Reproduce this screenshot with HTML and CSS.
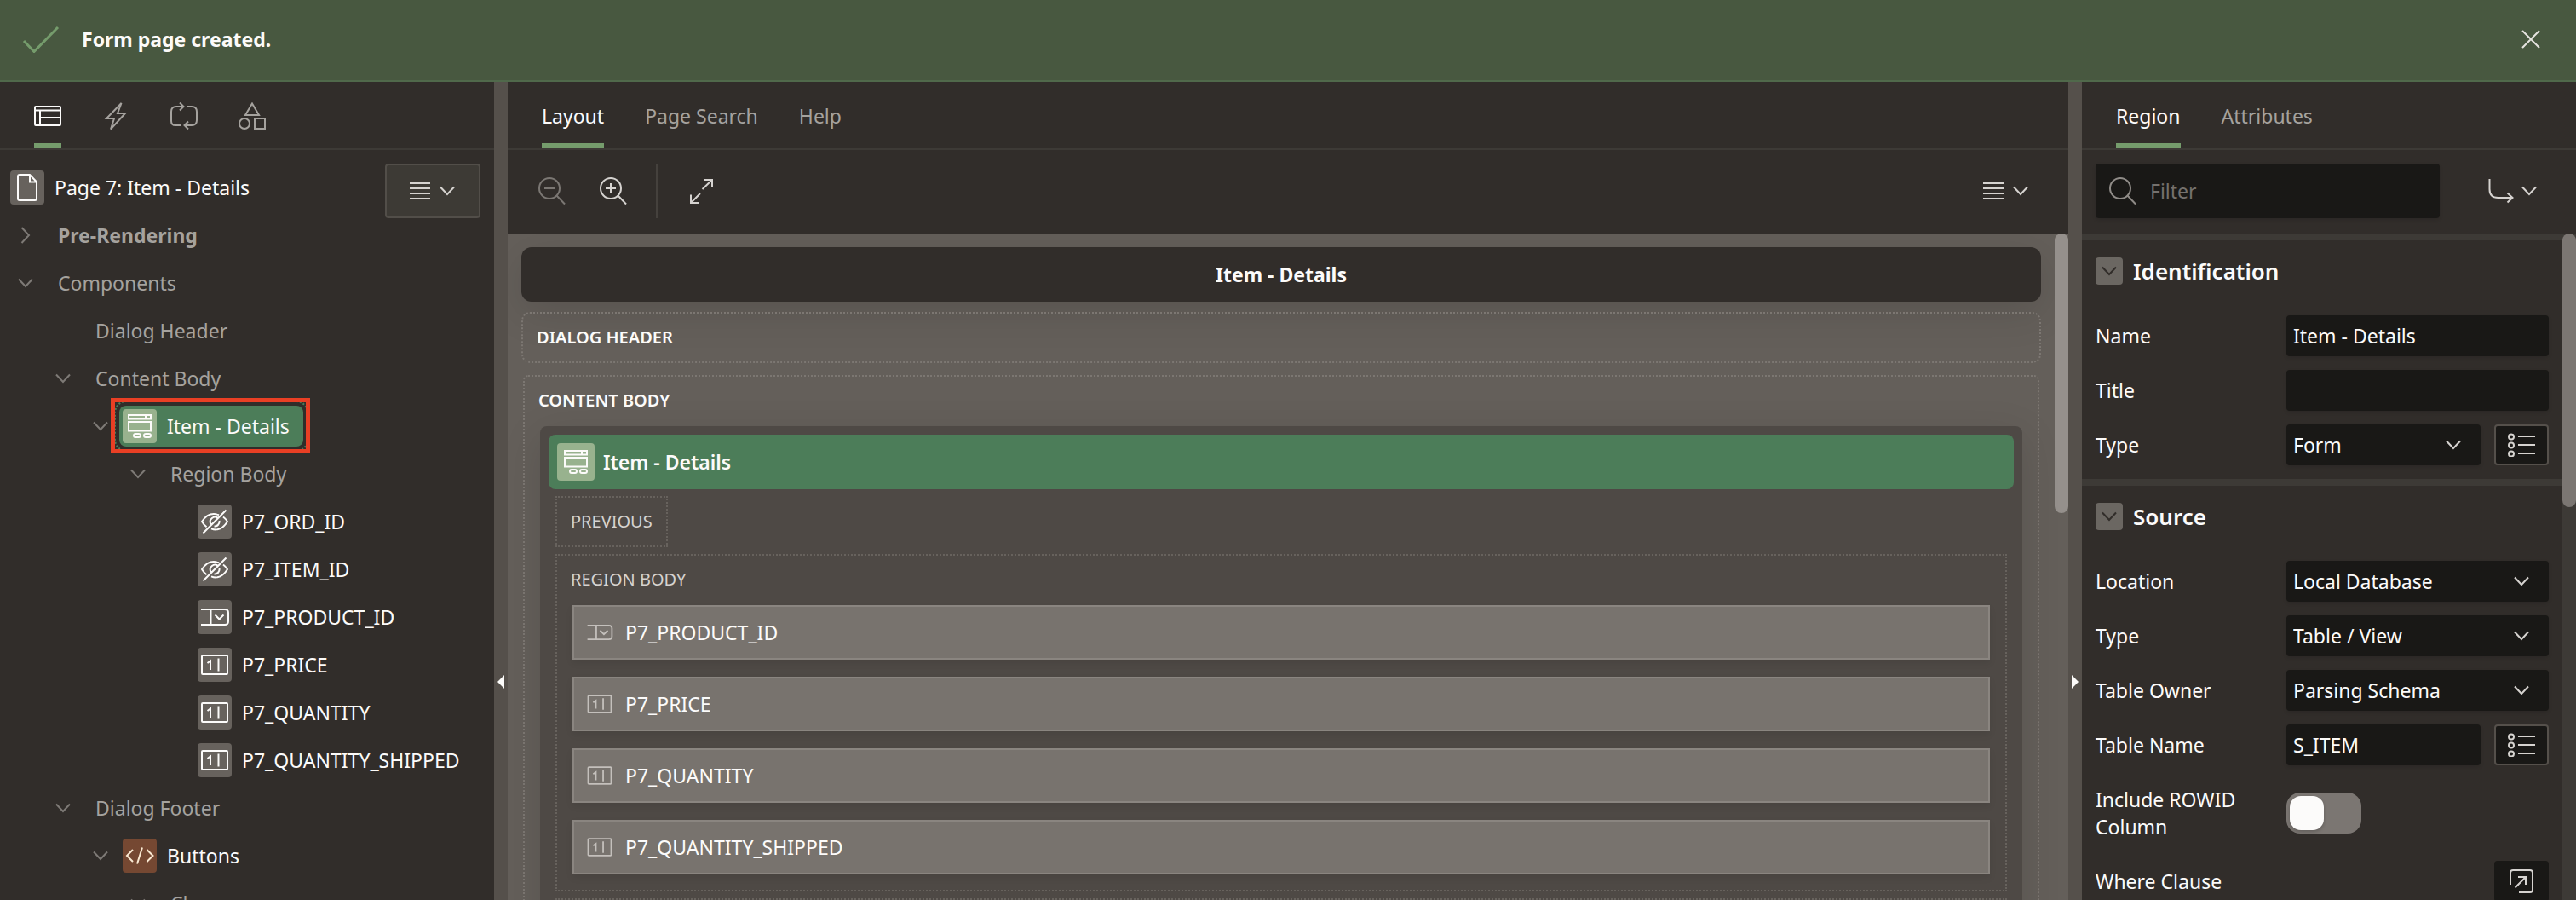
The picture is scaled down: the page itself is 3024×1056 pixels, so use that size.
FILE: index.html
```
<!DOCTYPE html>
<html lang="en">
<head>
<meta charset="utf-8">
<title>Page Designer - Item - Details</title>
<link rel="stylesheet" href="styles.css">
</head>
<body>
<svg class="sprite" aria-hidden="true">
  <symbol id="i-down" viewBox="0 0 20 12"><path d="M2 1.500l8 8.500 8-8.500"/></symbol>
  <symbol id="i-right" viewBox="0 0 12 20"><path d="M1.500 1l8.500 9-8.500 9"/></symbol>
  <symbol id="i-lines" viewBox="0 0 24 22"><path d="M0 2h24M0 8h24M0 14h24M0 20h24"/></symbol>
  <symbol id="i-check" viewBox="0 0 44 32"><path d="M2 18l12 12.500L42 2"/></symbol>
  <symbol id="i-close" viewBox="0 0 22 22"><path d="M1 1l20 20M21 1L1 21"/></symbol>
  <symbol id="i-layout" viewBox="0 0 32 32"><rect x="1" y="5" width="30" height="22" rx="1"/><path d="M1 9.500h30M7 9.500V27M7 18h24"/></symbol>
  <symbol id="i-bolt" viewBox="0 0 32 32"><path d="M22.500 1L5 19h9l-4 12.500L27 13h-9z"/></symbol>
  <symbol id="i-cycle" viewBox="0 0 32 32"><path d="M15 5H7q-6 0-6 6v11q0 5 5 5h6M11 .500L15.500 5 11 9.500M20 5h5q6 0 6 6v10q0 6-6 6h-8M21 22.500L16.500 27l4.500 4.500"/></symbol>
  <symbol id="i-shapes" viewBox="0 0 32 32"><path d="M16 1.500L24 15H8z"/><circle cx="7" cy="25" r="6"/><rect x="19" y="19" width="12" height="12"/></symbol>
  <symbol id="i-page" viewBox="0 0 40 40"><path d="M23 5H11q-2 0-2 2v26q0 2 2 2h18q2 0 2-2V13.500zM23 5v8.500h8"/></symbol>
  <symbol id="i-form" viewBox="0 0 40 40"><rect x="7" y="7" width="26" height="4.500"/><path d="M27 7v4.500"/><rect x="7" y="15" width="26" height="10.500"/><rect x="13" y="29" width="8" height="4" rx="2"/><rect x="25" y="29" width="8" height="4" rx="2"/></symbol>
  <symbol id="i-hidden" viewBox="0 0 40 40"><path d="M25 12.300C15 8.500 9 14 5 20c1.500 2.500 3.500 4.700 5.500 6.300M30 14.500c2 1.500 3.600 3.300 5 5.500-5 8-12 11.300-19 8.300M24 16a5.600 5.600 0 0 0-8.500 7M25.500 19a5.600 5.600 0 0 1-6 6.500M6.500 33.500L33.500 6.500"/></symbol>
  <symbol id="i-select" viewBox="0 0 40 40"><path d="M4 11h28q4 0 4 4v10q0 4-4 4H4M15.500 11v18M20.500 17.500l5 5 5-5"/></symbol>
  <symbol id="i-number" viewBox="0 0 40 40"><rect x="5" y="9" width="30" height="22" rx="1"/><path d="M11.500 18l3.500-2.500V26M24.500 12.500v15"/></symbol>
  <symbol id="i-code" viewBox="0 0 40 40"><path d="M12 13l-7 7 7 7M28.500 13l7 7-7 7M23 10.500l-6 19"/></symbol>
  <symbol id="i-search" viewBox="0 0 32 32"><circle cx="13" cy="13" r="12"/><path d="M21.500 21.500L31 31.500"/></symbol>
  <symbol id="i-expand" viewBox="0 0 32 32"><path d="M16.500 14L28 3M18.500 3H28v9M14 19L3 30M3 20.500V30h9"/></symbol>
  <symbol id="i-goto" viewBox="0 0 30 30"><path d="M1.500 1v12q0 10 10 10H28M22.500 17.500L28.500 23l-6 5.500"/></symbol>
  <symbol id="i-list" viewBox="0 0 32 28"><circle cx="4" cy="4.500" r="3"/><circle cx="4" cy="14.500" r="3"/><circle cx="4" cy="24.500" r="3"/><path d="M12 4h20M12 14h20M12 24h20"/></symbol>
  <symbol id="i-popup" viewBox="0 0 28 28"><path d="M1 18V4q0-3 3-3h20q3 0 3 3v20q0 3-3 3H11M6.500 21.500L19 9M10 9h9v9"/></symbol>
</svg>

<header class="banner" role="status">
  <svg class="banner-check"><use href="#i-check"/></svg>
  <strong class="banner-text">Form page created.</strong>
  <button class="plain banner-close" aria-label="Close"><svg><use href="#i-close"/></svg></button>
</header>

<main class="designer">
  <aside class="pane tree-pane">
    <nav class="tabs icon-tabs">
      <a href="#rendering" class="tab active" aria-label="Rendering"><svg class="ic32"><use href="#i-layout"/></svg></a>
      <a href="#dynamic" class="tab" aria-label="Dynamic Actions"><svg class="ic32"><use href="#i-bolt"/></svg></a>
      <a href="#processing" class="tab" aria-label="Processing"><svg class="ic32"><use href="#i-cycle"/></svg></a>
      <a href="#shared" class="tab" aria-label="Page Shared Components"><svg class="ic32"><use href="#i-shapes"/></svg></a>
    </nav>
    <div class="tree-head">
      <span class="badge"><svg><use href="#i-page"/></svg></span>
      <span class="root-label">Page 7: Item - Details</span>
      <button class="menu-button" aria-label="Tree menu"><svg class="lines"><use href="#i-lines"/></svg><svg class="down"><use href="#i-down"/></svg></button>
    </div>
    <ul class="tree">
      <li><div class="node"><span class="twisty"><svg class="right"><use href="#i-right"/></svg></span><b class="group">Pre-Rendering</b></div></li>
      <li><div class="node"><span class="twisty"><svg class="down"><use href="#i-down"/></svg></span><span class="group">Components</span></div>
        <ul>
          <li><div class="node"><span class="twisty"></span><span class="group">Dialog Header</span></div></li>
          <li><div class="node"><span class="twisty"><svg class="down"><use href="#i-down"/></svg></span><span class="group">Content Body</span></div>
            <ul>
              <li><div class="node"><span class="twisty"><svg class="down"><use href="#i-down"/></svg></span><span class="item selected"><span class="badge green"><svg><use href="#i-form"/></svg></span>Item - Details<span class="callout"></span></span></div>
                <ul>
                  <li><div class="node"><span class="twisty"><svg class="down"><use href="#i-down"/></svg></span><span class="group">Region Body</span></div>
                    <ul>
                      <li><div class="node"><span class="twisty"></span><span class="item"><span class="badge"><svg><use href="#i-hidden"/></svg></span>P7_ORD_ID</span></div></li>
                      <li><div class="node"><span class="twisty"></span><span class="item"><span class="badge"><svg><use href="#i-hidden"/></svg></span>P7_ITEM_ID</span></div></li>
                      <li><div class="node"><span class="twisty"></span><span class="item"><span class="badge"><svg><use href="#i-select"/></svg></span>P7_PRODUCT_ID</span></div></li>
                      <li><div class="node"><span class="twisty"></span><span class="item"><span class="badge"><svg><use href="#i-number"/></svg></span>P7_PRICE</span></div></li>
                      <li><div class="node"><span class="twisty"></span><span class="item"><span class="badge"><svg><use href="#i-number"/></svg></span>P7_QUANTITY</span></div></li>
                      <li><div class="node"><span class="twisty"></span><span class="item"><span class="badge"><svg><use href="#i-number"/></svg></span>P7_QUANTITY_SHIPPED</span></div></li>
                    </ul>
                  </li>
                </ul>
              </li>
            </ul>
          </li>
          <li><div class="node"><span class="twisty"><svg class="down"><use href="#i-down"/></svg></span><span class="group">Dialog Footer</span></div>
            <ul>
              <li><div class="node"><span class="twisty"><svg class="down"><use href="#i-down"/></svg></span><span class="item"><span class="badge brown"><svg><use href="#i-code"/></svg></span>Buttons</span></div>
                <ul>
                  <li><div class="node"><span class="twisty"><svg class="down"><use href="#i-down"/></svg></span><span class="group">Close</span></div></li>
                </ul>
              </li>
            </ul>
          </li>
        </ul>
      </li>
    </ul>
  </aside>

  <div class="splitter"><button class="plain arrow arrow-left" aria-label="Collapse left pane"></button></div>

  <section class="pane canvas-pane">
    <nav class="tabs">
      <a href="#layout" class="tab active">Layout</a>
      <a href="#search" class="tab">Page Search</a>
      <a href="#help" class="tab">Help</a>
    </nav>
    <div class="toolbar">
      <button class="plain dim" aria-label="Zoom out" disabled><svg class="ic32"><use href="#i-search"/><path d="M7 13h12"/></svg></button>
      <button class="plain" aria-label="Zoom in"><svg class="ic32"><use href="#i-search"/><path d="M7 13h12M13 7v12"/></svg></button>
      <span class="divider"></span>
      <button class="plain" aria-label="Expand"><svg class="ic32"><use href="#i-expand"/></svg></button>
      <button class="plain canvas-menu" aria-label="Layout menu"><svg class="lines"><use href="#i-lines"/></svg><svg class="down"><use href="#i-down"/></svg></button>
    </div>
    <div class="scroll-area">
      <div class="canvas">
        <h1 class="page-title">Item - Details</h1>
        <div class="slot">
          <h2 class="slot-title">DIALOG HEADER</h2>
        </div>
        <div class="slot body-slot">
          <h2 class="slot-title">CONTENT BODY</h2>
          <div class="region">
            <div class="region-title"><span class="badge green large"><svg><use href="#i-form"/></svg></span>Item - Details</div>
            <div class="region-slots">
              <div class="inner-slot short">PREVIOUS</div>
              <div class="inner-slot">
                <div class="inner-title">REGION BODY</div>
                <div class="page-item"><svg><use href="#i-select"/></svg>P7_PRODUCT_ID</div>
                <div class="page-item"><svg><use href="#i-number"/></svg>P7_PRICE</div>
                <div class="page-item"><svg><use href="#i-number"/></svg>P7_QUANTITY</div>
                <div class="page-item"><svg><use href="#i-number"/></svg>P7_QUANTITY_SHIPPED</div>
              </div>
              <div class="inner-slot"></div>
            </div>
          </div>
        </div>
      </div>
      <div class="scrollbar canvas-bar"><span class="thumb"></span></div>
    </div>
  </section>

  <div class="splitter"><button class="plain arrow arrow-right" aria-label="Collapse right pane"></button></div>

  <aside class="pane props-pane">
    <nav class="tabs">
      <a href="#region" class="tab active">Region</a>
      <a href="#attributes" class="tab">Attributes</a>
    </nav>
    <div class="filter-bar">
      <label class="filter"><svg class="ic32"><use href="#i-search"/></svg><input type="text" placeholder="Filter" aria-label="Filter"></label>
      <button class="plain goto" aria-label="Go to group"><svg class="goto-icon"><use href="#i-goto"/></svg><svg class="down"><use href="#i-down"/></svg></button>
    </div>
    <div class="scroll-area">
      <div class="props">
        <section class="prop-group">
          <h2 class="prop-heading"><button class="collapse" aria-label="Collapse Identification"><svg class="down"><use href="#i-down"/></svg></button>Identification</h2>
          <div class="prop"><label for="p-name">Name</label><input class="field" id="p-name" type="text" value="Item - Details"></div>
          <div class="prop"><label for="p-title">Title</label><input class="field" id="p-title" type="text"></div>
          <div class="prop"><label for="p-type">Type</label><span class="select"><select class="field" id="p-type"><option>Form</option></select><svg class="down"><use href="#i-down"/></svg></span><button class="lov" aria-label="Type list"><svg class="list"><use href="#i-list"/></svg></button></div>
        </section>
        <section class="prop-group">
          <h2 class="prop-heading"><button class="collapse" aria-label="Collapse Source"><svg class="down"><use href="#i-down"/></svg></button>Source</h2>
          <div class="prop"><label for="p-loc">Location</label><span class="select"><select class="field" id="p-loc"><option>Local Database</option></select><svg class="down"><use href="#i-down"/></svg></span></div>
          <div class="prop"><label for="p-stype">Type</label><span class="select"><select class="field" id="p-stype"><option>Table / View</option></select><svg class="down"><use href="#i-down"/></svg></span></div>
          <div class="prop"><label for="p-owner">Table Owner</label><span class="select"><select class="field" id="p-owner"><option>Parsing Schema</option></select><svg class="down"><use href="#i-down"/></svg></span></div>
          <div class="prop"><label for="p-table">Table Name</label><input class="field" id="p-table" type="text" value="S_ITEM"><button class="lov" aria-label="Table list"><svg class="list"><use href="#i-list"/></svg></button></div>
          <div class="prop tall"><label for="p-rowid">Include ROWID Column</label><input class="toggle" id="p-rowid" type="checkbox" role="switch"></div>
          <div class="prop"><span class="prop-label">Where Clause</span><button class="lov editor" aria-label="Edit Where Clause"><svg class="popup"><use href="#i-popup"/></svg></button></div>
        </section>
      </div>
      <div class="scrollbar props-bar"><span class="thumb"></span></div>
    </div>
  </aside>
</main>
</body>
</html>
```
FILE: styles.css
```
:root {
  --bg: #312d2a;
  --line: #3d3a36;
  --text: #fcfbfa;
  --muted: #a5a29e;
  --icon: #d6d3d0;
  --field: #191816;
  --accent: #759c6c;
  --green: #4c7d59;
}

* { box-sizing: border-box; }

body {
  margin: 0;
  height: 100vh;
  display: flex;
  flex-direction: column;
  overflow: hidden;
  background: var(--bg);
  color: var(--text);
  font: 400 23px/32px "Noto Sans", "Open Sans", sans-serif;
}

svg { display: block; flex: none; fill: none; stroke: currentColor; stroke-width: 2; }
.sprite { position: absolute; width: 0; height: 0; }
.ic32 { width: 32px; height: 32px; }
.down { width: 20px; height: 12px; }
.right { width: 12px; height: 20px; }
.lines { width: 24px; height: 22px; }

button, input, select { font: inherit; color: inherit; margin: 0; }
button { display: flex; align-items: center; justify-content: center; cursor: pointer; }
.plain { padding: 0; border: 0; background: none; color: var(--icon); }

/* Success banner */
.banner {
  flex: none;
  display: flex;
  align-items: center;
  height: 96px;
  padding: 0 42px 2px 26px;
  background: #485840;
  border-bottom: 2px solid #50694b;
}
.banner-check { width: 44px; height: 32px; margin-right: 26px; color: var(--accent); stroke-width: 3; }
.banner-text { font-weight: 700; }
.banner-close { margin-left: auto; color: #e6e4e0; }
.banner-close svg { width: 22px; height: 22px; }

/* Three pane layout */
.designer { flex: 1; min-height: 0; display: flex; }
.pane { display: flex; flex-direction: column; min-width: 0; min-height: 0; overflow: hidden; }
.tree-pane, .props-pane { flex: 0 0 580px; }
.canvas-pane { flex: 1; }
.splitter { flex: 0 0 16px; padding: 696px 4px 0; background: #55504b; }
.arrow { width: 8px; height: 16px; background: var(--text); }
.arrow-left { clip-path: polygon(0 50%, 100% 0, 100% 100%); }
.arrow-right { clip-path: polygon(0 0, 100% 50%, 0 100%); }

.tabs { flex: none; display: flex; gap: 48px; height: 80px; padding: 0 40px; border-bottom: 2px solid var(--line); }
.tab { display: flex; align-items: center; padding-top: 8px; border-bottom: 6px solid transparent; color: var(--muted); text-decoration: none; }
.tab.active { color: var(--text); border-bottom-color: var(--accent); }

/* Component tree */
.tree-head { flex: none; display: flex; align-items: flex-start; height: 72px; padding: 16px 16px 0 12px; }
.tree-head .badge { margin-top: 8px; }
.root-label { margin: 12px auto 0 12px; }
.menu-button { width: 112px; height: 64px; gap: 10px; padding: 0; border: 2px solid #524e49; border-radius: 4px; background: #3d3a35; color: var(--icon); }
.tree, .tree ul { margin: 0; padding: 0; list-style: none; }
.tree ul { padding-left: 44px; }
.node { display: flex; align-items: center; height: 56px; padding-left: 14px; white-space: nowrap; }
.twisty { flex: none; display: flex; justify-content: center; width: 32px; margin-right: 10px; color: #7e7a76; }
.group { padding-left: 12px; color: var(--muted); }
.item { display: flex; align-items: center; gap: 12px; }
.badge { flex: none; display: grid; place-items: center; width: 40px; height: 40px; border-radius: 4px; background: #67625d; color: var(--text); }
.badge svg { width: 40px; height: 40px; }
.badge.green { background: #98b28e; }
.badge.brown { background: #754832; color: #f9e9d2; }
.badge.large { width: 44px; height: 44px; }
.selected { position: relative; height: 48px; margin-left: -4px; padding: 0 16px 0 4px; border-radius: 8px; background: var(--green); outline: 2px dotted var(--green); outline-offset: 4px; }
.callout { position: absolute; inset: -9px -8px -8px -10px; border: 5px solid #e93f24; }

/* Layout canvas */
.toolbar { flex: none; display: flex; align-items: center; height: 98px; padding: 0 46px 2px 36px; }
.toolbar .plain + .plain { margin-left: 40px; }
.toolbar .dim { color: #7b7773; }
.divider { width: 2px; height: 64px; margin: 0 36px 0 34px; background: #45413d; }
.toolbar .plain.canvas-menu { margin-left: auto; gap: 10px; }
.scroll-area { flex: 1; min-height: 0; display: flex; overflow: hidden; }
.canvas { flex: 1; min-width: 0; padding: 16px; background: #645f5a; }
.page-title {
  margin: 0 0 12px;
  border-radius: 12px;
  background: var(--bg);
  box-shadow: 0 12px 48px rgba(0, 0, 0, .12);
  font-size: 23px;
  font-weight: 700;
  line-height: 64px;
  text-align: center;
}
.slot { position: relative; border: 2px dotted #7c7772; border-radius: 10px; }
.slot-title { margin: 0; padding: 12px 16px; font-size: 20px; font-weight: 600; line-height: 32px; }
.body-slot { margin: 14px 2px 0; border-radius: 6px; }
.region { margin: 2px 18px 0; padding: 10px 10px 40px; border-radius: 8px; background: #4e4945; box-shadow: 0 12px 48px rgba(0, 0, 0, .12); }
.region-title { display: flex; align-items: center; gap: 10px; height: 64px; padding: 0 10px; border-radius: 8px; background: var(--green); font-weight: 600; }
.region-slots { display: flex; flex-direction: column; gap: 8px; padding: 8px; color: var(--icon); font-size: 20px; }
.inner-slot { padding: 12px 18px 18px; border: 2px dotted #67625d; }
.inner-slot.short { align-self: flex-start; padding: 12px 16px; }
.inner-title { margin: 0 0 14px -2px; }
.page-item { display: flex; align-items: center; gap: 12px; height: 64px; padding: 0 12px; border: 2px solid #8a8580; background: #78736e; box-shadow: 0 4px 8px rgba(0, 0, 0, .08); color: var(--text); font-size: 23px; }
.page-item + .page-item { margin-top: 20px; }
.page-item svg { width: 36px; height: 40px; color: #c4c0bc; }

.scrollbar { flex: 0 0 16px; }
.thumb { display: block; border-radius: 8px; }
.canvas-bar { background: #645f5a; }
.canvas-bar .thumb { height: 42%; background: #95908c; }
.props-bar { background: var(--line); }
.props-bar .thumb { height: 41%; background: #7b7672; }

/* Property editor */
.filter-bar { flex: none; display: flex; align-items: flex-start; gap: 24px; height: 98px; padding: 16px; }
.filter { flex: 1; min-width: 0; display: flex; align-items: center; gap: 16px; height: 64px; padding: 0 16px; border-radius: 4px; background: var(--field); color: #8f8b87; box-shadow: 0 2px 4px rgba(0, 0, 0, .12); }
.filter input { flex: 1; min-width: 0; padding: 0; border: 0; outline: 0; background: none; color: var(--text); }
.filter input::placeholder { color: #75716d; opacity: 1; }
.goto { width: 120px; height: 64px; gap: 8px; padding-left: 4px; }
.goto-icon { width: 30px; height: 30px; }
.props { flex: 1; min-width: 0; }
.prop-group { display: flex; flex-direction: column; gap: 16px; padding: 20px 16px 16px; border-top: 8px solid var(--line); }
.prop-heading { display: flex; align-items: center; gap: 12px; margin: 0 0 20px; font-size: 26px; font-weight: 600; line-height: 32px; }
.collapse { width: 32px; height: 32px; padding: 0; border: 0; border-radius: 4px; background: #6b6762; color: var(--bg); }
.prop { display: flex; align-items: center; gap: 16px; min-height: 48px; }
.prop.tall { padding: 8px 0; }
.prop > label, .prop-label { flex: 0 0 208px; }
.field { flex: 1; min-width: 0; width: 100%; height: 48px; padding: 0 8px; border: 0; border-radius: 4px; outline: 0; appearance: none; background: var(--field); box-shadow: 0 2px 4px rgba(0, 0, 0, .12); }
.select { flex: 1; min-width: 0; position: relative; }
.select .field { display: block; }
.select .down { position: absolute; right: 22px; top: 18px; color: var(--icon); pointer-events: none; }
.lov { flex: none; width: 64px; height: 48px; padding: 0; border: 2px solid #55504b; border-radius: 4px; background: var(--field); color: var(--icon); }
.list { width: 32px; height: 28px; }
.editor { margin-left: auto; border-color: transparent; background-clip: border-box; }
.popup { width: 28px; height: 28px; }
.toggle { position: relative; width: 88px; height: 48px; border-radius: 16px; appearance: none; background: #7b7672; cursor: pointer; }
.toggle::before { content: ""; display: block; width: 40px; height: 40px; margin: 4px; border-radius: 13px; background: var(--text); box-shadow: 0 2px 4px rgba(0, 0, 0, .2); }
.toggle:checked { background: var(--green); }
.toggle:checked::before { margin-left: 44px; }
```
